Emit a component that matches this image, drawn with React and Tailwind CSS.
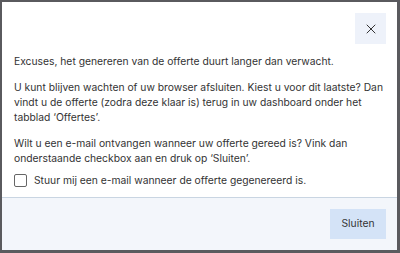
import { X } from "lucide-react"

function App() {
  return (
    <div className="w-[400px] h-[253px] bg-[#5a5a5e] pl-[2px] pr-[3px] pt-[2px] pb-[3px] font-['Inter',sans-serif]">
      <div className="w-full h-full bg-white flex flex-col">
        <div className="flex justify-end pt-[11px] pr-[11px]">
          <button className="w-[31px] h-[31px] bg-[#eef2fa] flex items-center justify-center text-[#333]">
            <X size={16} strokeWidth={1.5} />
          </button>
        </div>
        <div className="pl-[12px] pr-[6px] pt-[10px] text-[10.3px] leading-[15px] text-[#333] flex flex-col gap-[11px]">
          <p>Excuses, het genereren van de offerte duurt langer dan verwacht.</p>
          <p>
            U kunt blijven wachten of uw browser afsluiten. Kiest u voor dit laatste? Dan vindt u de offerte (zodra deze
            klaar is) terug in uw dashboard onder het tabblad ‘Offertes’.
          </p>
          <p>
            Wilt u een e-mail ontvangen wanneer uw offerte gereed is? Vink dan onderstaande checkbox aan en druk op
            ‘Sluiten’.
          </p>
          <label className="flex items-center gap-[7px] -mt-[4px]">
            <span className="w-[13px] h-[13px] border border-[#666] rounded-[2px] bg-white"></span>
            <span>Stuur mij een e-mail wanneer de offerte gegenereerd is.</span>
          </label>
        </div>
        <div className="mt-auto h-[53px] bg-[#f3f6fb] border-t border-[#c9d5e2] flex items-center justify-end pr-[11px]">
          <button className="w-[56px] h-[30px] bg-[#d4e3f7] text-[#333] text-[10.3px]">Sluiten</button>
        </div>
      </div>
    </div>
  )
}

export default App
